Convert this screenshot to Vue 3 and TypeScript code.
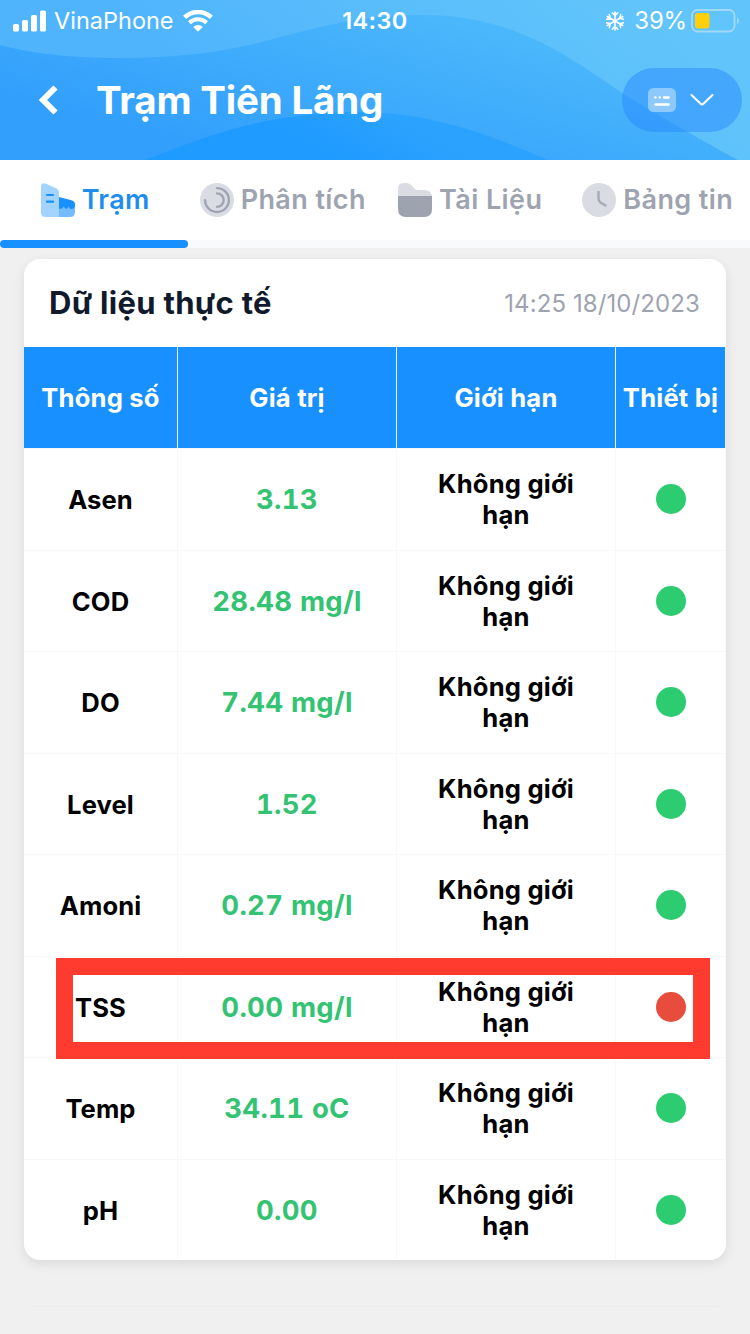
<script setup lang="ts">
interface Reading {
  name: string
  value: string
  limit: string
  online: boolean
}

const limit = 'Không giới hạn'
const readings: Reading[] = [
  { name: 'Asen', value: '3.13', limit, online: true },
  { name: 'COD', value: '28.48 mg/l', limit, online: true },
  { name: 'DO', value: '7.44 mg/l', limit, online: true },
  { name: 'Level', value: '1.52', limit, online: true },
  { name: 'Amoni', value: '0.27 mg/l', limit, online: true },
  { name: 'TSS', value: '0.00 mg/l', limit, online: false },
  { name: 'Temp', value: '34.11 oC', limit, online: true },
  { name: 'pH', value: '0.00', limit, online: true },
]
</script>

<template>
  <div class="screen">
    <header class="header">
      <svg class="waves" viewBox="0 0 750 160" preserveAspectRatio="none">
        <defs>
          <linearGradient id="sky" gradientUnits="userSpaceOnUse" x1="560" y1="-60" x2="340" y2="200">
            <stop offset="0" stop-color="#61c4fa" />
            <stop offset="0.45" stop-color="#5abefb" />
            <stop offset="1" stop-color="#4fb4fc" />
          </linearGradient>
          <linearGradient id="mid" gradientUnits="userSpaceOnUse" x1="420" y1="0" x2="370" y2="190">
            <stop offset="0" stop-color="#4cb8fb" />
            <stop offset="1" stop-color="#329ffc" />
          </linearGradient>
          <linearGradient id="deep" gradientUnits="userSpaceOnUse" x1="380" y1="110" x2="350" y2="165">
            <stop offset="0" stop-color="#2ba2fd" />
            <stop offset="1" stop-color="#1f9aff" />
          </linearGradient>
        </defs>
        <rect width="750" height="160" fill="url(#sky)" />
        <path d="M0 45C42 56 82 58 125 58C170 58 214 53 250 45C310 30 350 15 424 15C530 15 590 75 640 104C672 123 706 143 738 160H0Z" fill="url(#mid)" />
        <path d="M145 160C220 130 280 112 355 112C430 112 488 134 548 160Z" fill="url(#deep)" />
      </svg>

      <div class="status">
        <div class="status-left">
          <svg class="signal" width="34" height="22" viewBox="0 0 34 22" fill="#fff">
            <rect x="0" y="14" width="6" height="7.5" rx="1.6" />
            <rect x="9" y="10" width="6" height="11.5" rx="1.6" />
            <rect x="18" y="5" width="6" height="16.5" rx="1.6" />
            <rect x="27" y="0.5" width="6" height="21" rx="1.6" />
          </svg>
          <span class="carrier">VinaPhone</span>
          <svg class="wifi" width="30" height="22" viewBox="0 0 30 22">
            <path d="M1.6 7.4A19.2 19.2 0 0 1 28.4 7.4" fill="none" stroke="#fff" stroke-width="4.4" />
            <path d="M6.4 12.8A12.3 12.3 0 0 1 23.6 12.8" fill="none" stroke="#fff" stroke-width="4" />
            <path d="M10.2 17A6.9 6.9 0 0 1 19.8 17L15 21.8Z" fill="#fff" />
          </svg>
        </div>
        <span class="clock">14:30</span>
        <div class="status-right">
          <svg class="snow" width="18" height="20" viewBox="-9 -10 18 20" fill="none" stroke="#fff" stroke-width="1.5" stroke-linecap="round">
            <g v-for="a in 6" :key="a" :transform="`rotate(${a * 60})`">
              <path d="M0 0V-9M-2.8 -8.2L0 -5.4L2.8 -8.2" />
            </g>
          </svg>
          <span class="percent">39%</span>
          <svg class="battery" width="49" height="24" viewBox="0 0 49 24">
            <rect x="1" y="1" width="42.5" height="21.5" rx="5.5" fill="none" stroke="#a0d9fc" stroke-width="1.8" />
            <rect x="4" y="4" width="14.5" height="15.5" rx="3" fill="#ffcf0b" />
            <path d="M46 8.5Q48 9.3 48 11.7Q48 14.2 46 15Z" fill="#a0d9fc" />
          </svg>
        </div>
      </div>

      <div class="nav">
        <svg class="back" width="22" height="32" viewBox="0 0 22 32" fill="none" stroke="#fff" stroke-width="6">
          <path d="M18.5 3.5L6 16L18.5 28.5" />
        </svg>
        <h1>Trạm Tiên Lãng</h1>
        <div class="pill">
          <svg width="28" height="24" viewBox="0 0 28 24">
            <rect width="28" height="24" rx="5.5" fill="#8dc9fd" />
            <path d="M7.3 9.5H7.5M11.6 9.5H11.8M16 9.5H20.7M7.3 16.5H20.7" stroke="#fff" stroke-width="2.3" stroke-linecap="round" />
          </svg>
          <svg width="24" height="14" viewBox="0 0 24 14" fill="none" stroke="#fff" stroke-width="2" stroke-linecap="round" stroke-linejoin="round">
            <path d="M1.5 2L10.6 10.8Q12 12 13.4 10.8L22.5 2" />
          </svg>
        </div>
      </div>
    </header>

    <nav class="tabs">
      <div class="tab active">
        <svg width="34" height="34" viewBox="0 0 34 34">
          <path d="M0 4Q0 -1.2 5 0.7L15 5.2Q18 6.8 18 9.5V34H4.5Q0 34 0 29.5Z" fill="#a3d3ff" />
          <path d="M18 23H34V29Q34 34 29 34H18Z" fill="#74bbff" />
          <path d="M18 14L30.5 17.2Q34 18.2 34 21.5V23Q33 26 30.5 26Q28.5 26 27.5 23.5Q25.5 28 22.7 23.5Q21 26.5 18 25.5Z" fill="#1890ff" />
          <path d="M6 12H12M6 18.7H12" stroke="#1890ff" stroke-width="2.2" stroke-linecap="round" />
        </svg>
        <span>Trạm</span>
      </div>
      <div class="tab">
        <svg width="34" height="34" viewBox="0 0 34 34">
          <circle cx="17" cy="17" r="17" fill="#dadce3" />
          <path d="M17 5.2A11.9 11.9 0 1 1 5.1 17.1" fill="none" stroke="#9ea3b2" stroke-width="2.3" stroke-linecap="round" />
          <path d="M17 10.4A6.7 6.7 0 0 1 17 23.8" fill="none" stroke="#9ea3b2" stroke-width="2.3" stroke-linecap="round" />
        </svg>
        <span>Phân tích</span>
      </div>
      <div class="tab">
        <svg width="34" height="34" viewBox="0 0 34 34">
          <path d="M0 15V6Q0 0 6 0H8Q12 0 14.5 3.5Q17 7 20 7H26Q34 7 34 15Z" fill="#dadce3" />
          <path d="M0 13H34V26Q34 34 26 34H8Q0 34 0 26Z" fill="#9ea3b0" />
        </svg>
        <span>Tài Liệu</span>
      </div>
      <div class="tab">
        <svg width="34" height="34" viewBox="0 0 34 34">
          <circle cx="17" cy="17" r="17" fill="#dadce3" />
          <path d="M16.5 9V15.5Q16.5 18.2 18.5 19.6L23.5 22.5" fill="none" stroke="#a5a9b8" stroke-width="2.4" stroke-linecap="round" />
        </svg>
        <span>Bảng tin</span>
      </div>
    </nav>
    <div class="track"><div class="indicator"></div></div>

    <main class="content">
      <section class="card">
        <div class="card-head">
          <h2>Dữ liệu thực tế</h2>
          <time>14:25 18/10/2023</time>
        </div>
        <div class="row head">
          <div class="cell">Thông số</div>
          <div class="cell">Giá trị</div>
          <div class="cell">Giới hạn</div>
          <div class="cell">Thiết bị</div>
        </div>
        <div v-for="r in readings" :key="r.name" class="row" :class="{ flagged: !r.online }">
          <div class="cell name">{{ r.name }}</div>
          <div class="cell value">{{ r.value }}</div>
          <div class="cell limit"><span>{{ r.limit }}</span></div>
          <div class="cell"><i class="dot" :class="{ off: !r.online }"></i></div>
          <div v-if="!r.online" class="alert"></div>
        </div>
      </section>
      <div class="next-edge"></div>
    </main>
  </div>
</template>

<style>
body {
  margin: 0;
  background: #f0f0f0;
}
</style>

<style scoped>
.screen {
  width: 750px;
  height: 1334px;
  overflow: hidden;
  background: #f0f0f0;
  font-family: Inter, "Liberation Sans", sans-serif;
  color: #000;
}
.header {
  position: relative;
  height: 160px;
  color: #fff;
}
.waves {
  position: absolute;
  inset: 0;
  width: 750px;
  height: 160px;
}
.status {
  position: relative;
  display: grid;
  grid-template-columns: 1fr auto 1fr;
  align-items: center;
  height: 40px;
  padding: 0 10px 0 13px;
}
.status-left,
.status-right {
  display: flex;
  align-items: center;
}
.status-right {
  justify-content: flex-end;
}
.status span {
  line-height: 40px;
  padding-top: 1px;
  white-space: nowrap;
}
.carrier {
  margin-left: 7px;
  font-size: 23.5px;
}
.wifi {
  margin-left: 9px;
}
.clock {
  padding-right: 3px;
  font-size: 23.5px;
  font-weight: 600;
  letter-spacing: 0.4px;
}
.percent {
  margin: 0 4px 0 10px;
  font-size: 24px;
  letter-spacing: -0.2px;
}
.nav {
  position: relative;
  display: flex;
  align-items: center;
  height: 64px;
  margin-top: 28px;
  padding: 0 8px 0 37px;
}
h1 {
  flex: 1;
  margin: 0 0 0 37px;
  font-size: 38.5px;
  font-weight: 700;
  line-height: 64px;
  letter-spacing: -0.2px;
  white-space: nowrap;
}
.pill {
  display: flex;
  align-items: center;
  justify-content: center;
  gap: 14px;
  box-sizing: border-box;
  width: 120px;
  height: 64px;
  padding-right: 2px;
  border-radius: 32px;
  background: rgba(36, 134, 255, 0.45);
}
.tabs {
  display: grid;
  grid-template-columns: repeat(4, 1fr);
  height: 80px;
  background: #fff;
}
.tab {
  display: flex;
  align-items: center;
  justify-content: center;
  gap: 7px;
  padding-left: 3px;
  color: #9ea3b0;
  font-size: 27px;
  font-weight: 600;
  letter-spacing: 0.4px;
  white-space: nowrap;
}
.tab svg {
  flex: none;
}
.tab span {
  padding-bottom: 2px;
}
.tab.active {
  color: #1f8ded;
}
.track {
  height: 8px;
  background: #f9fafb;
}
.indicator {
  width: 188px;
  height: 8px;
  border-radius: 4px;
  background: #1890ff;
}
.content {
  padding: 11px 24px 0;
}
.card {
  height: 1001px;
  border-radius: 16px;
  background: #fff;
  box-shadow: 0 4px 12px rgba(0, 0, 0, 0.09);
}
.card-head {
  display: flex;
  align-items: center;
  justify-content: space-between;
  height: 88px;
  padding: 0 26px 0 25px;
}
h2 {
  margin: 0;
  padding-bottom: 1px;
  color: #111a2c;
  font-size: 31px;
  font-weight: 700;
  letter-spacing: 0.3px;
  white-space: nowrap;
}
time {
  color: #9ea3b0;
  font-size: 24px;
  letter-spacing: 0.1px;
  white-space: nowrap;
}
.row {
  position: relative;
  display: grid;
  grid-template-columns: 154px 219px 219px 110px;
  height: 101.5px;
}
.row.head {
  height: 101px;
  background: #1890ff;
  color: #fff;
}
.row.flagged {
  z-index: 1;
}
.cell {
  box-sizing: border-box;
  display: flex;
  align-items: center;
  justify-content: center;
  border-top: 1px solid #f8f8f8;
  border-right: 1px solid #f8f8f8;
  font-size: 25.6px;
  font-weight: 700;
  letter-spacing: 0.2px;
  text-align: center;
  white-space: nowrap;
}
.head .cell {
  padding-bottom: 1px;
  border-top: 0;
  border-right-color: #e8f4ff;
}
.row:last-child .cell:last-of-type {
  border-right: 0;
  padding-right: 1px;
}
.cell.name {
  padding-top: 1px;
  letter-spacing: 0.1px;
}
.cell.value {
  color: #34c373;
  font-size: 27.5px;
  letter-spacing: 0.3px;
  font-variant-numeric: tabular-nums;
}
.limit span {
  width: 160px;
  line-height: 31px;
  white-space: normal;
}
.dot {
  width: 30px;
  height: 30px;
  border-radius: 50%;
  background: #2ecc71;
}
.dot.off {
  background: #e74c3c;
}
.alert {
  position: absolute;
  box-sizing: border-box;
  top: 2.5px;
  left: 31.5px;
  width: 654.5px;
  height: 101px;
  border: 17px solid #ff3b30;
}
.next-edge {
  height: 1px;
  margin: 46px 8px 0;
  background: #ebebeb;
}
</style>
